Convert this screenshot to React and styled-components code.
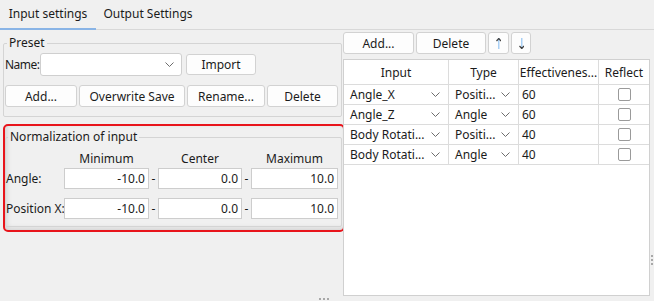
import React from 'react';
import styled, { createGlobalStyle } from 'styled-components';

const GlobalStyle = createGlobalStyle`
  html, body {
    margin: 0;
    padding: 0;
    background: #f0f0f0;
  }
  * {
    box-sizing: border-box;
  }
`;

const Window = styled.div`
  width: 654px;
  height: 301px;
  background: #f0f0f0;
  font-family: 'Noto Sans', 'Segoe UI', sans-serif;
  font-size: 12px;
  color: #1b1b1b;
  display: flex;
  flex-direction: column;
  overflow: hidden;
  position: relative;
`;

const TabBar = styled.div`
  height: 30px;
  display: flex;
  border-bottom: 1px solid #d8d8d8;
`;

const Tab = styled.div`
  width: ${p => p.width}px;
  display: flex;
  align-items: center;
  justify-content: center;
  padding-bottom: 2px;
  border-bottom: 2px solid ${p => (p.active ? '#89b4e6' : 'transparent')};
  margin-bottom: -1px;
`;

const Body = styled.div`
  flex: 1;
  display: flex;
`;

const LeftPane = styled.div`
  width: 343px;
  padding-left: 3px;
  display: flex;
  flex-direction: column;
`;

const GroupBox = styled.fieldset`
  margin: ${p => p.top || 6}px 0 0 0;
  width: ${p => p.width}px;
  border: 1px solid #d4d4d4;
  border-radius: 2px;
  padding: ${p => p.pad};

  legend {
    font-size: 12px;
    line-height: 14px;
    padding: 0 2px;
    margin-left: 2px;
  }
`;

const Row = styled.div`
  display: flex;
  align-items: center;
  gap: ${p => p.gap || 0}px;
  margin-top: ${p => p.top || 0}px;
`;

const Label = styled.span`
  flex: none;
  width: ${p => p.width}px;
  height: 21px;
  display: flex;
  align-items: center;
  white-space: nowrap;
  letter-spacing: ${p => p.tight ? '-0.5px' : 'normal'};
`;

const ComboBox = styled.div`
  flex: none;
  width: ${p => p.width}px;
  height: 23px;
  background: #fff;
  border: 1px solid #cfcfcf;
  border-radius: 3px;
  display: flex;
  align-items: center;
  justify-content: flex-end;
  padding-right: 7px;
`;

const Button = styled.div`
  flex: none;
  width: ${p => p.width}px;
  height: ${p => p.height || 22}px;
  margin-left: ${p => p.left || 0}px;
  background: #fdfdfd;
  border: 1px solid #d2d2d2;
  border-radius: 3px;
  display: flex;
  align-items: center;
  justify-content: center;
  white-space: nowrap;
`;

const Highlight = styled.div`
  margin-top: 7px;
  width: 342px;
  height: 108px;
  border: 2px solid #e8141b;
  border-radius: 5px;
  box-shadow: inset 2px -2px 5px rgba(0, 0, 0, 0.12);
`;

const NormGrid = styled.div`
  display: grid;
  grid-template-columns: 58px 85px 9px 84px 9px 87px;
  grid-template-rows: 16px 23px 30px;
  align-items: end;
  margin-top: 6px;
`;

const ColHead = styled.div`
  align-self: center;
  text-align: center;
  grid-column: ${p => p.col};
`;

const Dash = styled.div`
  height: 21px;
  display: flex;
  align-items: center;
  justify-content: center;
`;

const NumField = styled.div`
  height: 21px;
  background: #fff;
  border: 1px solid #cdcdcd;
  display: flex;
  align-items: center;
  justify-content: flex-end;
  padding-right: 3px;
`;

const RightPane = styled.div`
  flex: 1;
  padding: 2px 5px 5px 0;
  display: flex;
  flex-direction: column;
`;

const Table = styled.div`
  margin-top: 5px;
  flex: 1;
  width: 307px;
  background: #fff;
  border: 1px solid #d0d0d0;
  display: flex;
  flex-direction: column;
`;

const TRow = styled.div`
  display: grid;
  grid-template-columns: 105px 70px 80px 50px;
  height: ${p => (p.header ? 25 : 20)}px;
  border-bottom: 1px solid #dcdcdc;
`;

const Cell = styled.div`
  border-right: ${p => (p.last ? 'none' : '1px solid #dcdcdc')};
  display: flex;
  align-items: center;
  justify-content: ${p => (p.center ? 'center' : 'space-between')};
  padding: 0 ${p => (p.center ? 0 : 8)}px 0 ${p => (p.center ? 0 : p.indent || 6)}px;
  white-space: nowrap;
  overflow: hidden;
`;

const CheckBox = styled.div`
  width: 13px;
  height: 13px;
  border: 1px solid #9a9a9a;
  border-radius: 2px;
  background: #fff;
`;

const HDots = styled.div`
  position: absolute;
  left: 318px;
  bottom: 1px;
  width: 12px;
  height: 2px;
  background: radial-gradient(circle, #a8a8a8 45%, transparent 55%) 0 0 / 4px 2px repeat-x;
`;

const VDots = styled.div`
  position: absolute;
  right: 1px;
  top: 254px;
  width: 2px;
  height: 11px;
  background: radial-gradient(circle, #a8a8a8 45%, transparent 55%) 0 0 / 2px 4px repeat-y;
`;

const Chevron = () => (
  <svg width="9" height="5" viewBox="0 0 9 5">
    <path d="M0.5 0.5 L4.5 4.5 L8.5 0.5" fill="none" stroke="#6d6d6d" strokeWidth="1" />
  </svg>
);

const Arrow = ({ down }) => (
  <svg width="5" height="11" viewBox="0 0 5 11">
    <rect x="2" y="0" width="1.5" height="11" fill="#a9d0f5" />
    {down ? (
      <path d="M0.5 8 L2.75 10.5 L5 8" fill="none" stroke="#404040" strokeWidth="1.2" />
    ) : (
      <path d="M0.5 3 L2.75 0.5 L5 3" fill="none" stroke="#404040" strokeWidth="1.2" />
    )}
  </svg>
);

const rows = [
  { input: 'Angle_X', type: 'Positi...', eff: '60' },
  { input: 'Angle_Z', type: 'Angle', eff: '60' },
  { input: 'Body Rotati...', type: 'Positi...', eff: '40' },
  { input: 'Body Rotati...', type: 'Angle', eff: '40' },
];

const norms = [
  { label: 'Angle:', values: ['-10.0', '0.0', '10.0'] },
  { label: 'Position X:', values: ['-10.0', '0.0', '10.0'] },
];

export default function App() {
  return (
    <Window>
      <GlobalStyle />
      <TabBar>
        <Tab width={96} active>Input settings</Tab>
        <Tab width={104}>Output Settings</Tab>
      </TabBar>
      <Body>
        <LeftPane>
          <GroupBox width={336} pad="0 3px 9px 1px">
            <legend>Preset</legend>
            <Row top={3}>
              <Label width={35} tight>Name:</Label>
              <ComboBox width={142}>
                <Chevron />
              </ComboBox>
              <Button width={70} height={21} left={4}>Import</Button>
            </Row>
            <Row gap={2} top={9}>
              <Button width={72}>Add...</Button>
              <Button width={106}>Overwrite Save</Button>
              <Button width={78}>Rename...</Button>
              <Button width={71}>Delete</Button>
            </Row>
          </GroupBox>
          <Highlight>
            <GroupBox width={337} top={4} pad="0 2px 7px 0">
              <legend>Normalization of input</legend>
              <NormGrid>
                <ColHead col={2}>Minimum</ColHead>
                <ColHead col={4}>Center</ColHead>
                <ColHead col={6}>Maximum</ColHead>
                {norms.map(n => (
                  <React.Fragment key={n.label}>
                    <Label>{n.label}</Label>
                    <NumField>{n.values[0]}</NumField>
                    <Dash>-</Dash>
                    <NumField>{n.values[1]}</NumField>
                    <Dash>-</Dash>
                    <NumField>{n.values[2]}</NumField>
                  </React.Fragment>
                ))}
              </NormGrid>
            </GroupBox>
          </Highlight>
        </LeftPane>
        <RightPane>
          <Row gap={2}>
            <Button width={71}>Add...</Button>
            <Button width={70}>Delete</Button>
            <Button width={21}><Arrow /></Button>
            <Button width={20}><Arrow down /></Button>
          </Row>
          <Table>
            <TRow header>
              <Cell center>Input</Cell>
              <Cell center>Type</Cell>
              <Cell center>Effectivenes...</Cell>
              <Cell center last>Reflect</Cell>
            </TRow>
            {rows.map((r, i) => (
              <TRow key={i}>
                <Cell>{r.input}<Chevron /></Cell>
                <Cell>{r.type}<Chevron /></Cell>
                <Cell indent={3}>{r.eff}<span /></Cell>
                <Cell center last><CheckBox /></Cell>
              </TRow>
            ))}
          </Table>
        </RightPane>
      </Body>
      <HDots />
      <VDots />
    </Window>
  );
}
